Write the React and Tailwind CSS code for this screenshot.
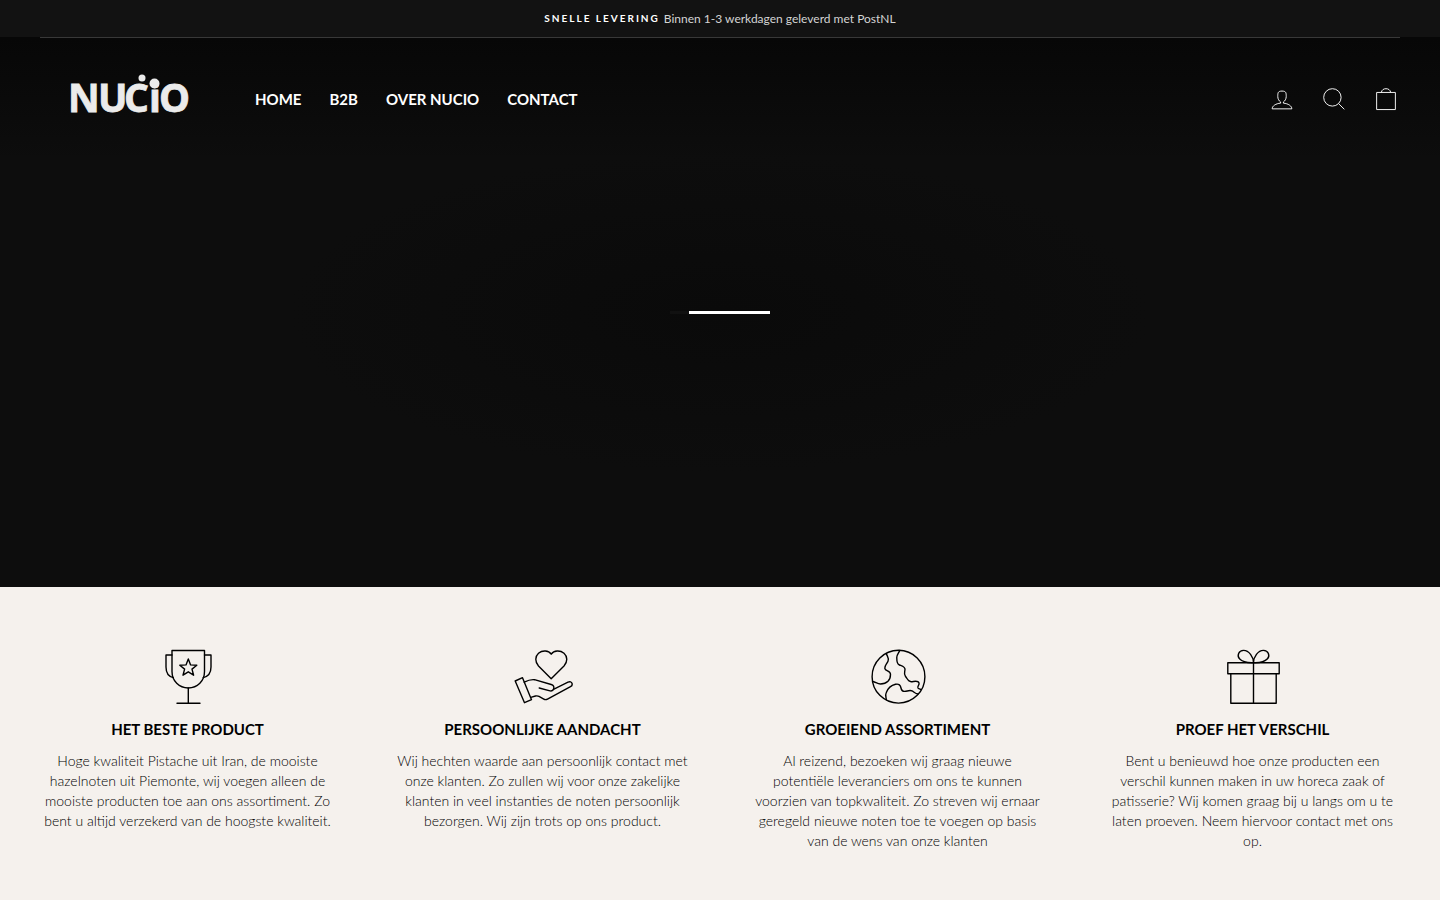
const navLinks = ["HOME", "B2B", "OVER NUCIO", "CONTACT"];

function Logo() {
    return (
        <svg viewBox="-10 -14 134 70" className="w-[134px] h-[70px]" role="img" aria-label="Nucio">
            <text
                x="-2 28 54 79 89"
                y="38"
                fill="#ebebeb"
                stroke="#ebebeb"
                strokeWidth="0.8"
                className="font-['Open_Sans',sans-serif] font-bold text-[39px] leading-10"
            >
                NUCiO
            </text>
            <circle cx="72" cy="4" r="3.5" fill="#ebebeb" />
            <circle cx="84.5" cy="9.5" r="5" fill="#ebebeb" />
        </svg>
    );
}

function HeaderIcon({ label, children }) {
    return (
        <button type="button" aria-label={label} className="text-white cursor-pointer">
            <svg viewBox="0 0 64 64" className="size-[30px]" fill="none" stroke="currentColor" strokeWidth="2">
                {children}
            </svg>
        </button>
    );
}

function FeatureIcon({ children }) {
    return (
        <svg
            viewBox="0 0 60 60"
            className="size-[60px] mx-auto text-black"
            fill="none"
            stroke="currentColor"
            strokeWidth="1.4"
            strokeLinecap="round"
            strokeLinejoin="round"
            aria-hidden="true"
        >
            {children}
        </svg>
    );
}

const features = [
    {
        title: "HET BESTE PRODUCT",
        text: "Hoge kwaliteit Pistache uit Iran, de mooiste hazelnoten uit Piemonte, wij voegen alleen de mooiste producten toe aan ons assortiment. Zo bent u altijd verzekerd van de hoogste kwaliteit.",
        icon: (
            <>
                <path d="M14 3.5H46.5V24.5C46.5 34 39.5 41 30.3 41S14 34 14 24.5Z" />
                <path d="M14 8H8V20C8 25.5 10.5 29.5 15.3 30.6M46.5 8H53V20C53 25.5 50 29.5 45.2 30.6" />
                <path d="M30.3 41V56.3M19 56.3H42" />
                <path d="M30.3 12L32.6 17.9 38.8 18.2 34 22.1 35.6 28.2 30.3 24.8 25 28.2 26.6 22.1 21.8 18.2 28 17.9Z" />
            </>
        ),
    },
    {
        title: "PERSOONLIJKE AANDACHT",
        text: "Wij hechten waarde aan persoonlijk contact met onze klanten. Zo zullen wij voor onze zakelijke klanten in veel instanties de noten persoonlijk bezorgen. Wij zijn trots op ons product.",
        icon: (
            <>
                <path d="M38.2 31.7L25.5 19C21.8 15 22 9.5 25.5 6.3C29.5 2.9 35.5 3.3 38.2 7.2C41 3.3 47 2.9 51 6.3C54.6 9.5 54.8 15 51 19Z" />
                <path d="M2.2 34L9.5 30.7 18.5 52.7 11.5 55.7Z" />
                <path d="M11.2 35.2C14.5 33.5 18 32.3 21.5 32.7L38.2 37.5C40.5 38.2 41.3 39.8 40.7 41.7C40.2 43.5 39 44.3 37 43.9L26.2 41" />
                <path d="M40.5 42.3L55 35.2C57 34.3 58.4 34.8 59 36.3C59.5 37.8 58.8 39 57.5 39.7L34.5 52.1C33 52.9 32 52.8 30.8 52.1L26 49.4C24.8 48.7 23.8 48.7 22.5 49L17.8 50.3" />
            </>
        ),
    },
    {
        title: "GROEIEND ASSORTIMENT",
        text: "Al reizend, bezoeken wij graag nieuwe potentiële leveranciers om ons te kunnen voorzien van topkwaliteit. Zo streven wij ernaar geregeld nieuwe noten toe te voegen op basis van de wens van onze klanten",
        icon: (
            <>
                <circle cx="30.5" cy="29.7" r="26.4" />
                <path d="M18.3 6.5C19 9.5 21.5 11 20 14.3C18.8 17 16.4 18.7 16.8 21.3C17.3 24.3 22.5 23.5 22.5 27.3C22.5 30 21.8 32.6 20 34.3C18 36.3 15.5 37 12.5 37C9.5 37 7.8 35.2 5 34.5" />
                <path d="M31.7 3.4C30.8 6 28.8 7.5 28.8 10.3C28.8 14 28.5 16.8 31.5 18C34.5 19.2 37.2 19.8 37 22.5C36.8 25 35.6 27 37.4 29.2C39.5 31.7 40 34.8 43.2 34.7C46 34.6 50 33 51 36C51.7 38 49.2 39 50 41C50.5 42 51.6 41.8 52.5 42.4" />
                <path d="M18.3 52.8C18.2 50.5 17 48 18.2 45.7C19.5 42.3 22.5 38.5 27.5 37.3C31 36.5 32.5 38.3 33 41C33.5 43.7 34.5 44.5 36.8 44.4C39 44.3 41 43.1 43.3 43.7C46 44.5 46.8 46.7 50 47" />
            </>
        ),
    },
    {
        title: "PROEF HET VERSCHIL",
        text: "Bent u benieuwd hoe onze producten een verschil kunnen maken in uw horeca zaak of patisserie? Wij komen graag bij u langs om u te laten proeven. Neem hiervoor contact met ons op.",
        icon: (
            <>
                <path d="M4.8 15.7H56.2V26.7H4.8ZM7.8 26.7H53.2V56.3H7.8ZM30.5 15.7V56.3" />
                <path d="M30.5 15.7C26 15.9 20 15.6 16.5 11.8C13.8 8.8 15.5 3.5 20.5 3.4C26 3.3 30.5 10 30.5 15.7C30.5 10 35 3.3 40.5 3.4C45.5 3.5 47.2 8.8 44.5 11.8C41 15.6 35 15.9 30.5 15.7Z" />
            </>
        ),
    },
];

export default function App() {
    return (
        <div className="min-h-screen bg-[#f5f1ed] font-['Lato','Open_Sans',sans-serif]">
            <div className="h-[37px] bg-[#121212] text-white flex items-center justify-center gap-1">
                <span className="text-[10px] font-bold tracking-[2px]">SNELLE LEVERING</span>
                <span className="text-xs text-[#d4d4d4]">Binnen 1-3 werkdagen geleverd met PostNL</span>
            </div>

            <div className="relative h-[550px] flex items-center justify-center bg-[#0d0d0d] bg-[radial-gradient(ellipse_430px_160px_at_center,#0a0a0a,#0d0d0d)]">
                <header className="absolute inset-x-0 top-0 bg-linear-to-b from-[#070707] to-transparent">
                    <div className="mx-10 border-t border-[#383838]" />
                    <div className="flex items-center pl-[60px] pr-[39px] h-[122px]">
                        <a href="#" className="-mt-2">
                            <Logo />
                        </a>
                        <nav className="ml-[61px] flex gap-7">
                            {navLinks.map((link) => (
                                <a key={link} href="#" className="text-white text-[15px] leading-5 font-bold">
                                    {link}
                                </a>
                            ))}
                        </nav>
                        <div className="ml-auto flex gap-[22px]">
                            <HeaderIcon label="Inloggen">
                                <path d="M35 40.84v-2.53c3.3-1.91 6-6.66 6-11.41 0-7.63 0-11.82-9-11.82s-9 4.19-9 11.82c0 4.75 2.7 9.51 6 11.41v2.53c-10.18.85-18 6-18 12.16h42c0-6.19-7.82-11.31-18-12.16z" />
                            </HeaderIcon>
                            <HeaderIcon label="Zoeken">
                                <path d="M47.16 28.58A18.58 18.58 0 1 1 28.58 10a18.58 18.58 0 0 1 18.58 18.58zM54 54L41.94 42" />
                            </HeaderIcon>
                            <HeaderIcon label="Winkelwagen">
                                <path d="M12 18h40v36.5H12zM22 18c1-5.5 5-8 10-8s9 2.5 10 8" />
                            </HeaderIcon>
                        </div>
                    </div>
                </header>

                <div className="w-[100px] h-[3px] bg-[#111111] flex justify-end" role="progressbar" aria-label="Laden">
                    <div className="w-[81px] bg-white" />
                </div>
            </div>

            <section className="grid grid-cols-4 gap-[60px] px-10 py-[60px] text-center">
                {features.map((feature) => (
                    <div key={feature.title}>
                        <FeatureIcon>{feature.icon}</FeatureIcon>
                        <h2 className="mt-3 text-[15px] leading-5 font-bold text-black">{feature.title}</h2>
                        <p className="mt-3 px-px text-sm leading-5 font-light text-black">{feature.text}</p>
                    </div>
                ))}
            </section>
        </div>
    );
}
